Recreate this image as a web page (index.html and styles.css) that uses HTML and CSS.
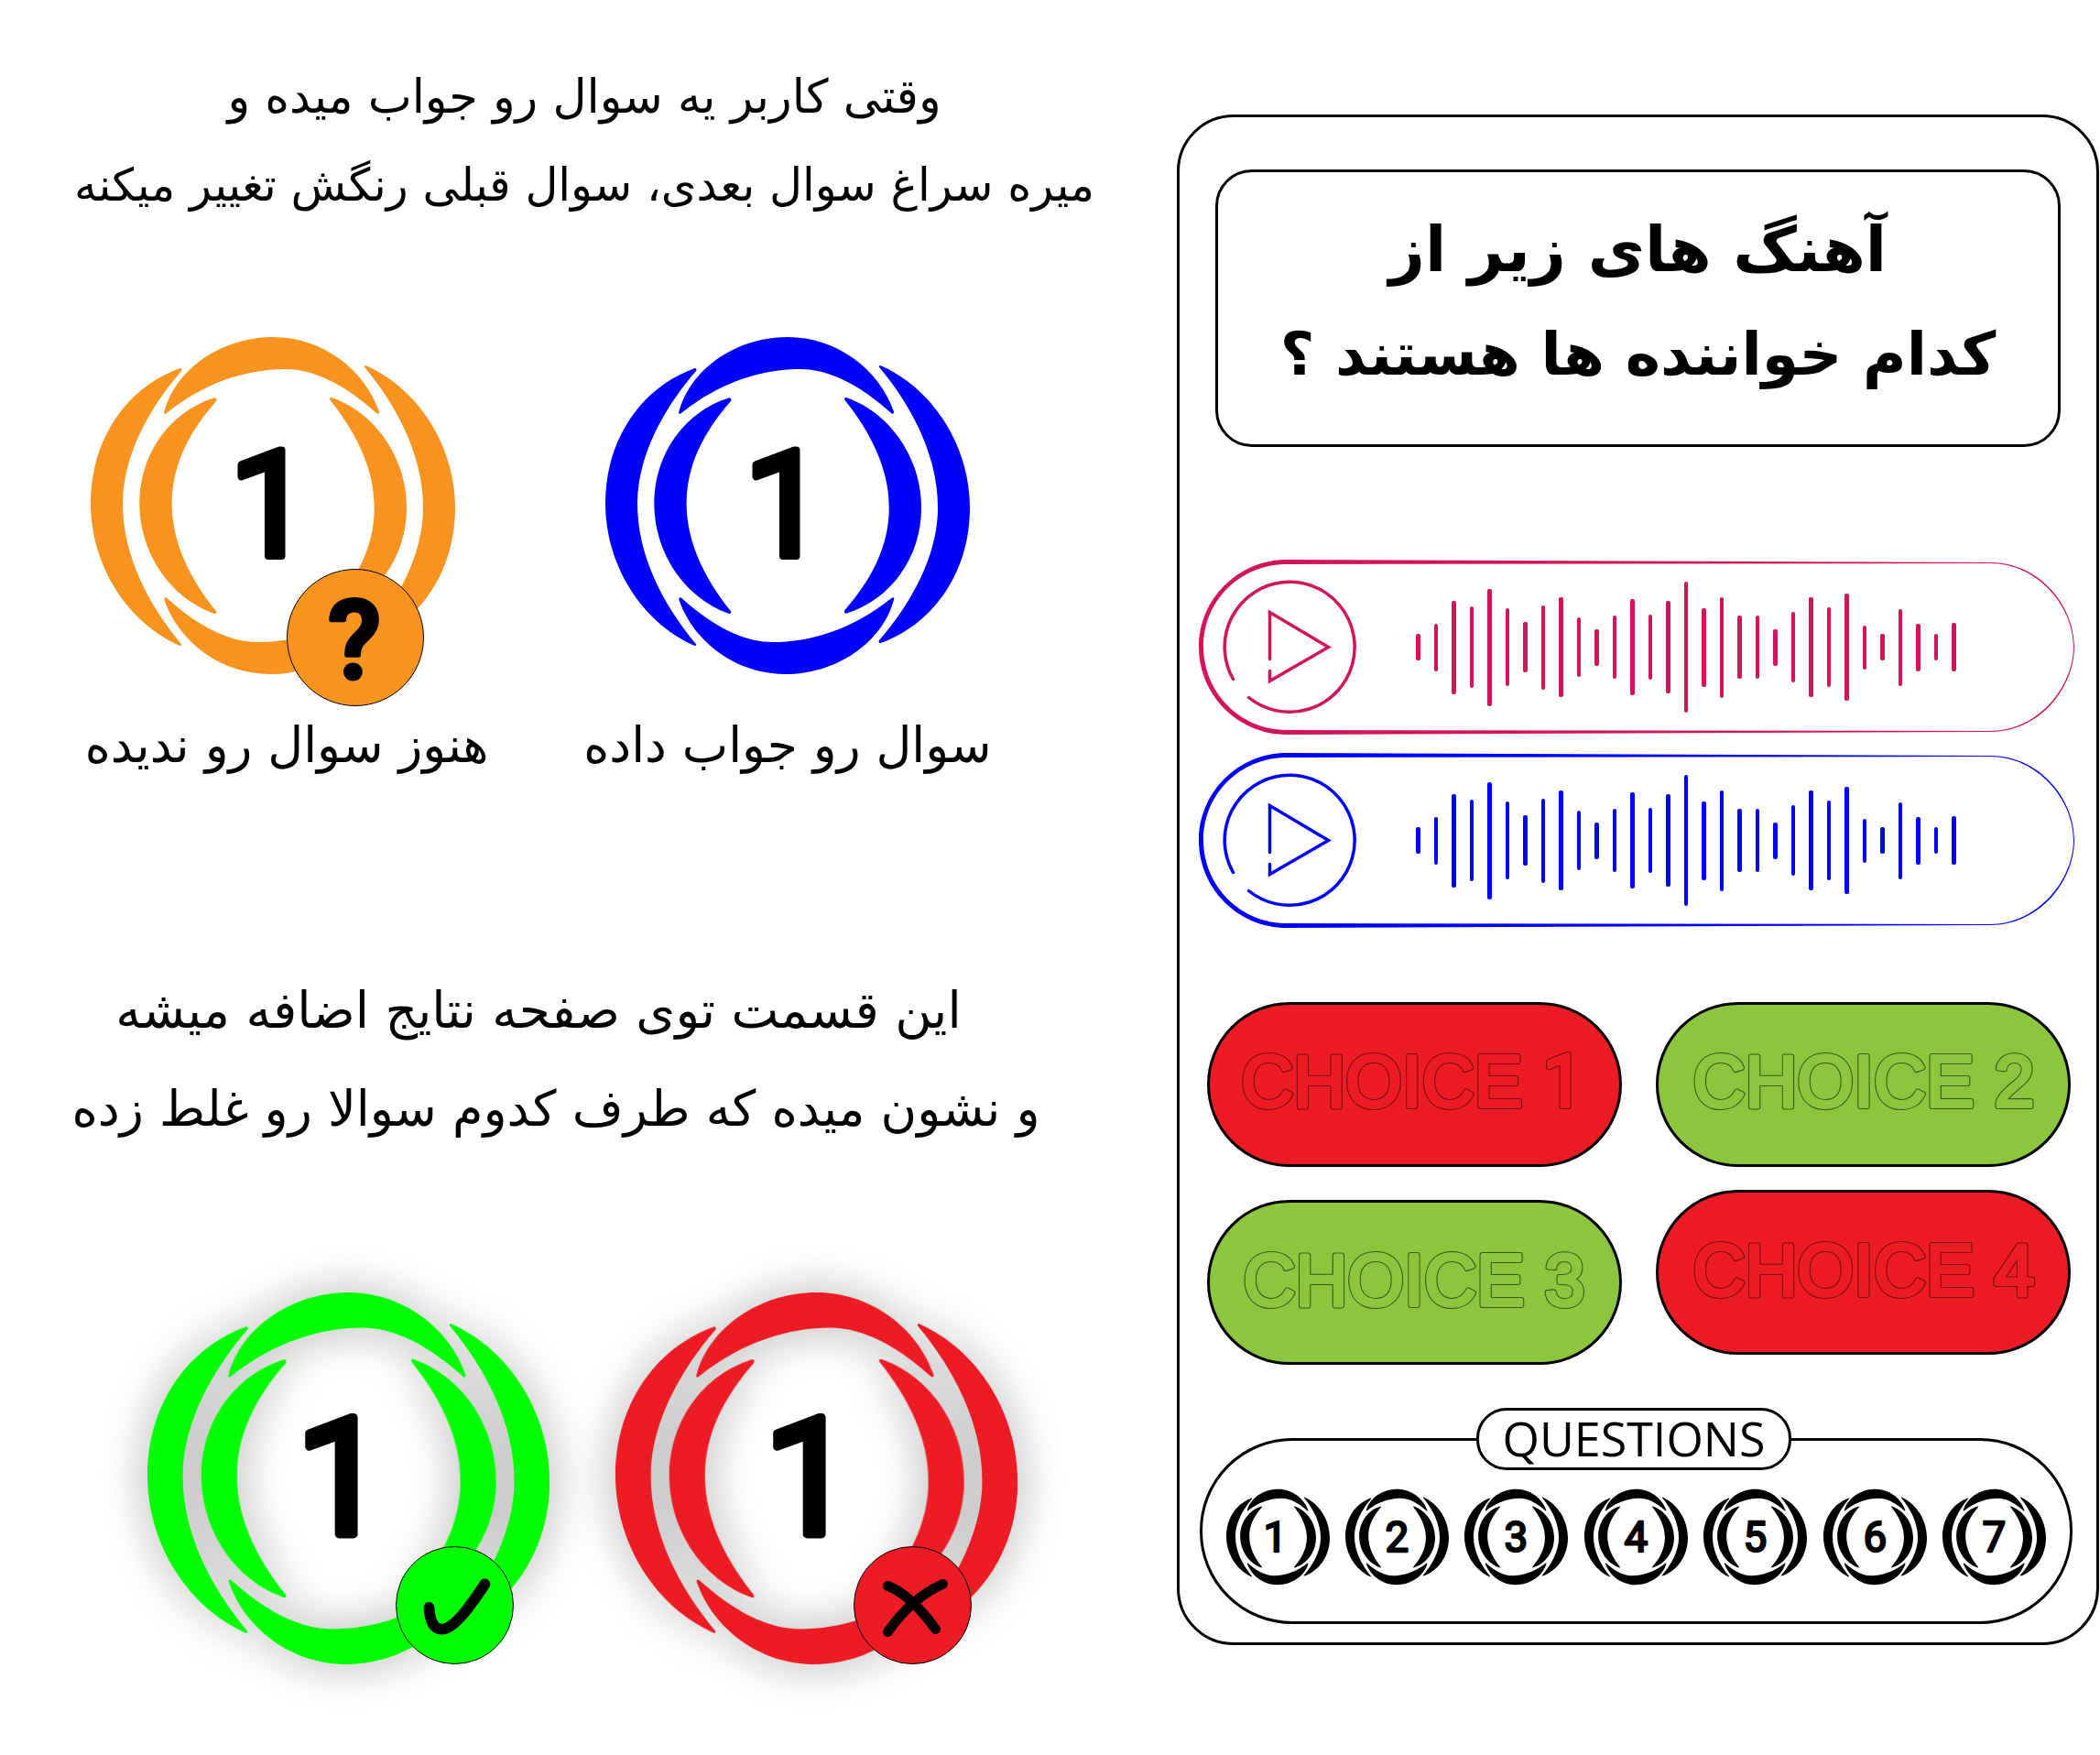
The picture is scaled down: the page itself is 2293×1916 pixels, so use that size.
FILE: index.html
```html
<!DOCTYPE html>
<html lang="fa">
<head>
<meta charset="utf-8">
<title>Quiz notes</title>
<link rel="stylesheet" href="styles.css">
</head>
<body>
<svg class="sprite" aria-hidden="true">
  <defs>
    <g id="crescents">
      <path id="cr-outer" d="M355,187C180,250 62,420 62,630C62,830 180,1020 355,1097Q362,1097 358,1090C250,960 167,800 167,630C167,470 260,310 360,195Q362,186 355,187Z"/>
      <use href="#cr-outer" transform="rotate(180 659.5 637.5)"/>
      <path id="cr-top" d="M303,330C340,190 490,85 660,85C820,85 960,190 1008,330Q1008,340 1000,335C900,245 800,190 700,190C580,190 440,230 310,335Q300,340 303,330Z"/>
      <use href="#cr-top" transform="rotate(180 655.5 637.5)"/>
      <path id="cr-inner" d="M468,284C320,330 222,470 222,630C222,790 320,940 468,992Q478,992 472,982C390,880 328,760 328,630C328,500 390,390 473,295Q478,284 468,284Z"/>
      <use href="#cr-inner" transform="rotate(180 660 637.5)"/>
    </g>
    <g id="play">
      <path d="M28.5,128.5A71,71 0 1 0 11.5,108.5"/>
      <path d="M51.5,86.5V35.5L115.5,73.5L51.5,110.5V99.5"/>
    </g>
    <path id="frame" fill-rule="evenodd" d="M96,0L864,3C918,3 956,50 956,95C956,140 918,188 864,188L96,191C43,191 0,148 0,95.5C0,43 43,0 96,0ZM96,5C45,5 5,45 5,95C5,145 45,186 96,186L864,187C915,187 955,140 955,95C955,50 915,4 864,4Z"/>
  </defs>
</svg>

<main class="page">
  <section class="notes">
    <div class="note note-first">
      <p class="size-a">وقتی کاربر یه سوال رو جواب میده و</p>
      <p class="size-b">میره سراغ سوال بعدی، سوال قبلی رنگش تغییر میکنه</p>
    </div>

    <div class="legend">
      <figure class="legend-item">
        <div class="logo-wrap logo-large">
          <svg class="logo orange" viewBox="62 85 1195 1105"><use href="#crescents"/><text class="digit" x="788" y="803">1</text></svg>
          <div class="badge badge-question"><svg viewBox="0 0 150 150"><text class="mark" x="74" y="120">?</text></svg></div>
        </div>
        <figcaption class="caption caption-shift">هنوز سوال رو ندیده</figcaption>
      </figure>
      <figure class="legend-item">
        <div class="logo-wrap logo-large">
          <svg class="logo blue" viewBox="62 85 1195 1105"><use href="#crescents"/><text class="digit" x="788" y="803">1</text></svg>
        </div>
        <figcaption class="caption">سوال رو جواب داده</figcaption>
      </figure>
    </div>

    <div class="note note-second">
      <p class="line-short">این قسمت توی صفحه نتایج اضافه میشه</p>
      <p class="line-long">و نشون میده که طرف کدوم سوالا رو غلط زده</p>
    </div>

    <div class="results">
      <div class="logo-wrap logo-result">
        <svg class="logo green shadowed" viewBox="62 85 1195 1105"><use href="#crescents"/><text class="digit" x="775" y="803">1</text></svg>
        <div class="badge badge-right"><svg viewBox="0 0 129 129"><path class="tick" d="M36,67C37,82 41,92 51,91C64,90 80,68 98,41"/></svg></div>
      </div>
      <div class="logo-wrap logo-result">
        <svg class="logo red shadowed" viewBox="62 85 1195 1105"><use href="#crescents"/><text class="digit" x="775" y="803">1</text></svg>
        <div class="badge badge-wrong"><svg viewBox="0 0 129 129"><path class="cross" d="M37,43C55,50 72,66 90,91M98,41C78,50 58,64 37,94"/></svg></div>
      </div>
    </div>
  </section>

  <section class="phone">
    <h1 class="question">
      <span class="question-a">آهنگ های زیر از</span>
      <span class="question-b">کدام خواننده ها هستند ؟</span>
    </h1>

    <div class="audio audio-pink">
      <svg class="audio-frame" viewBox="0 0 956 191"><use href="#frame"/></svg>
      <svg class="audio-play" viewBox="0 0 147 147"><use href="#play"/></svg>
      <div class="wave">
        <i style="height:29px"></i><i style="height:52px"></i><i style="height:102px"></i><i style="height:89px"></i><i style="height:128px"></i><i style="height:85px"></i><i style="height:55px"></i><i style="height:92px"></i><i style="height:109px"></i><i style="height:65px"></i><i style="height:40px"></i><i style="height:69px"></i><i style="height:105px"></i><i style="height:71px"></i><i style="height:101px"></i><i style="height:143px"></i><i style="height:86px"></i><i style="height:110px"></i><i style="height:69px"></i><i style="height:69px"></i><i style="height:40px"></i><i style="height:77px"></i><i style="height:109px"></i><i style="height:87px"></i><i style="height:117px"></i><i style="height:48px"></i><i style="height:29px"></i><i style="height:84px"></i><i style="height:52px"></i><i style="height:29px"></i><i style="height:53px"></i>
      </div>
    </div>

    <div class="audio audio-blue">
      <svg class="audio-frame" viewBox="0 0 956 191"><use href="#frame"/></svg>
      <svg class="audio-play" viewBox="0 0 147 147"><use href="#play"/></svg>
      <div class="wave">
        <i style="height:29px"></i><i style="height:52px"></i><i style="height:102px"></i><i style="height:89px"></i><i style="height:128px"></i><i style="height:85px"></i><i style="height:55px"></i><i style="height:92px"></i><i style="height:109px"></i><i style="height:65px"></i><i style="height:40px"></i><i style="height:69px"></i><i style="height:105px"></i><i style="height:71px"></i><i style="height:101px"></i><i style="height:143px"></i><i style="height:86px"></i><i style="height:110px"></i><i style="height:69px"></i><i style="height:69px"></i><i style="height:40px"></i><i style="height:77px"></i><i style="height:109px"></i><i style="height:87px"></i><i style="height:117px"></i><i style="height:48px"></i><i style="height:29px"></i><i style="height:84px"></i><i style="height:52px"></i><i style="height:29px"></i><i style="height:53px"></i>
      </div>
    </div>

    <div class="choices">
      <div class="choice-col choice-col-a">
        <div class="choice wrong">
          <svg viewBox="3 3 447 174"><g class="edge"><text id="c1" x="224" y="114">CHOICE <tspan class="round-one">1</tspan></text></g><g class="core"><use href="#c1"/></g></svg>
        </div>
        <div class="choice right">
          <svg viewBox="3 3 447 174"><g class="edge"><text id="c3" x="226" y="115">CHOICE 3</text></g><g class="core"><use href="#c3"/></g></svg>
        </div>
      </div>
      <div class="choice-col choice-col-b">
        <div class="choice right">
          <svg viewBox="3 3 447 174"><g class="edge"><text id="c2" x="227" y="114">CHOICE 2</text></g><g class="core"><use href="#c2"/></g></svg>
        </div>
        <div class="choice wrong">
          <svg viewBox="3 3 447 174"><g class="edge"><text id="c4" x="227" y="115">CHOICE 4</text></g><g class="core"><use href="#c4"/></g></svg>
        </div>
      </div>
    </div>

    <div class="questions">
      <div class="questions-label">QUESTIONS</div>
      <svg class="mini" viewBox="62 85 1195 1105"><use href="#crescents"/><text class="digit" x="762" y="803">1</text></svg>
      <svg class="mini" viewBox="62 85 1195 1105"><use href="#crescents"/><text class="digit digit-mid" x="659" y="803">2</text></svg>
      <svg class="mini" viewBox="62 85 1195 1105"><use href="#crescents"/><text class="digit digit-mid" x="659" y="803">3</text></svg>
      <svg class="mini" viewBox="62 85 1195 1105"><use href="#crescents"/><text class="digit digit-mid" x="659" y="803">4</text></svg>
      <svg class="mini" viewBox="62 85 1195 1105"><use href="#crescents"/><text class="digit digit-mid" x="659" y="803">5</text></svg>
      <svg class="mini" viewBox="62 85 1195 1105"><use href="#crescents"/><text class="digit digit-mid" x="659" y="803">6</text></svg>
      <svg class="mini" viewBox="62 85 1195 1105"><use href="#crescents"/><text class="digit digit-mid" x="659" y="803">7</text></svg>
    </div>
  </section>
</main>
</body>
</html>
```
FILE: styles.css
```css
* { box-sizing: border-box; }
html, body { margin: 0; padding: 0; background: #fff; color: #000; }
body { width: 2293px; height: 1916px; overflow: hidden; font-family: "DejaVu Sans", sans-serif; }
.sprite { position: absolute; width: 0; height: 0; }
.page { display: flex; width: 2293px; height: 1916px; }

/* left column */
.notes { width: 1285px; flex: none; }
.note { direction: rtl; text-align: center; white-space: nowrap; }
.note p { margin: 0; }
.note-first { padding-top: 57px; padding-bottom: 2px; line-height: 97px; width: 1276px; }
.size-a { font-size: 51px; }
.size-b { font-size: 49.5px; }
.note-second { margin-top: 196px; line-height: 107px; font-size: 55px; }
.note-second .line-short { width: 1176px; margin-right: 109px; }
.note-second .line-long { width: 1214px; margin-right: 71px; font-size: 54px; }

.legend { display: flex; margin-top: 115px; padding-left: 99px; gap: 164px; }
.legend-item { margin: 0; display: flex; flex-direction: column; align-items: center; width: 398px; }
.caption { direction: rtl; font-size: 53.5px; line-height: 80px; margin-top: 38px; white-space: nowrap; }
.caption-shift { margin-left: 30px; }

.results { display: flex; margin-top: 147px; padding-left: 161px; gap: 72px; }

/* logo */
.logo-wrap { position: relative; flex: none; }
.logo-large { width: 398px; height: 368px; }
.logo-result { width: 439px; height: 406px; }
.logo { display: block; width: 100%; height: 100%; overflow: visible; fill: currentColor; }
.orange { color: #f7931e; }
.blue { color: #0000ff; }
.green { color: #00ff00; }
.red { color: #ed1c24; }
.shadowed use { filter: drop-shadow(0 0 70px rgba(0, 0, 0, .3)); }
.digit {
  font-family: Roboto, sans-serif;
  font-size: 485px;
  font-weight: 400;
  text-anchor: end;
  fill: #000;
  stroke: #000;
  stroke-width: 24px;
  stroke-linejoin: round;
}
.digit-mid { text-anchor: middle; }

.badge { position: absolute; border: 1.5px solid #000; border-radius: 50%; }
.badge svg { display: block; width: 100%; height: 100%; overflow: visible; }
.badge-question { left: 214px; top: 253px; width: 150px; height: 150px; background: #f7931e; }
.badge-right { left: 271px; top: 277px; width: 129px; height: 129px; background: #00ff00; }
.badge-wrong { left: 260px; top: 277px; width: 129px; height: 129px; background: #ed1c24; }
.mark { font-family: Roboto, sans-serif; font-size: 120px; font-weight: 500; text-anchor: middle; stroke: #000; stroke-width: 5px; stroke-linejoin: round; }
.tick, .cross { fill: none; stroke: #000; stroke-linecap: round; stroke-linejoin: round; }
.tick { stroke-width: 12px; }
.cross { stroke-width: 11px; }

/* phone mockup */
.phone { width: 1007px; height: 1671px; margin-top: 125px; flex: none; border: 3px solid #000; border-radius: 62px; }
.question {
  display: flex; flex-direction: column; align-items: center; justify-content: center;
  width: 923px; height: 303px; margin: 57px 0 0 39px; padding-bottom: 14px;
  border: 3px solid #000; border-radius: 40px;
  direction: rtl; font-weight: 700; line-height: 114px; white-space: nowrap;
}
.question-a { font-size: 68px; }
.question-b { font-size: 65px; }
.audio { position: relative; display: flex; align-items: center; width: 956px; height: 191px; margin-left: 21px; }
.audio-pink { margin-top: 123px; color: #d4145a; }
.audio-blue { margin-top: 20px; color: #0000ff; }
.audio-frame { position: absolute; left: 0; top: 0; width: 956px; height: 191px; fill: currentColor; }
.audio-play { flex: none; width: 147px; height: 147px; margin-left: 25.5px; fill: none; stroke: currentColor; stroke-width: 3.5px; stroke-linecap: round; }
.wave { display: flex; align-items: center; gap: 15px; margin-left: 64.8px; }
.wave i { display: block; width: 4.5px; border-radius: 2px; background: currentColor; }

.choices { display: flex; margin-top: 81px; }
.choice-col { display: flex; flex-direction: column; width: 453px; }
.choice-col-a { margin-left: 30px; gap: 36px; }
.choice-col-b { margin-left: 37px; gap: 25px; }
.choice { height: 180px; border: 3px solid #000; border-radius: 90px; }
.choice svg { display: block; width: 100%; height: 100%; }
.choice text { font-family: "Liberation Sans", sans-serif; font-size: 79px; text-anchor: middle; stroke-linejoin: round; }
.round-one { font-family: Roboto, sans-serif; }
.wrong { background: #ed1c24; }
.right { background: #8cc63f; }
.edge { stroke-width: 6px; }
.core { stroke-width: 3.8px; }
.wrong .edge { fill: #7a0a0e; stroke: #7a0a0e; }
.wrong .core { fill: #ed1c24; stroke: #ed1c24; }
.right .edge { fill: #3a5a15; stroke: #3a5a15; }
.right .core { fill: #8cc63f; stroke: #8cc63f; }

.questions {
  position: relative; display: flex; gap: 17.4px; align-items: flex-start;
  width: 953px; height: 203px; margin: 80px 0 0 22px; padding: 52px 0 0 25.6px;
  border: 3px solid #000; border-radius: 101px;
}
.questions-label {
  position: absolute; left: 299px; top: -36px; width: 344px; height: 68px;
  border: 3px solid #000; border-radius: 33px; background: #fff;
  font-family: "Open Sans", sans-serif; font-size: 52px; line-height: 60px; text-align: center;
}
.mini { flex: none; width: 113px; height: 106px; fill: #000; }
```
